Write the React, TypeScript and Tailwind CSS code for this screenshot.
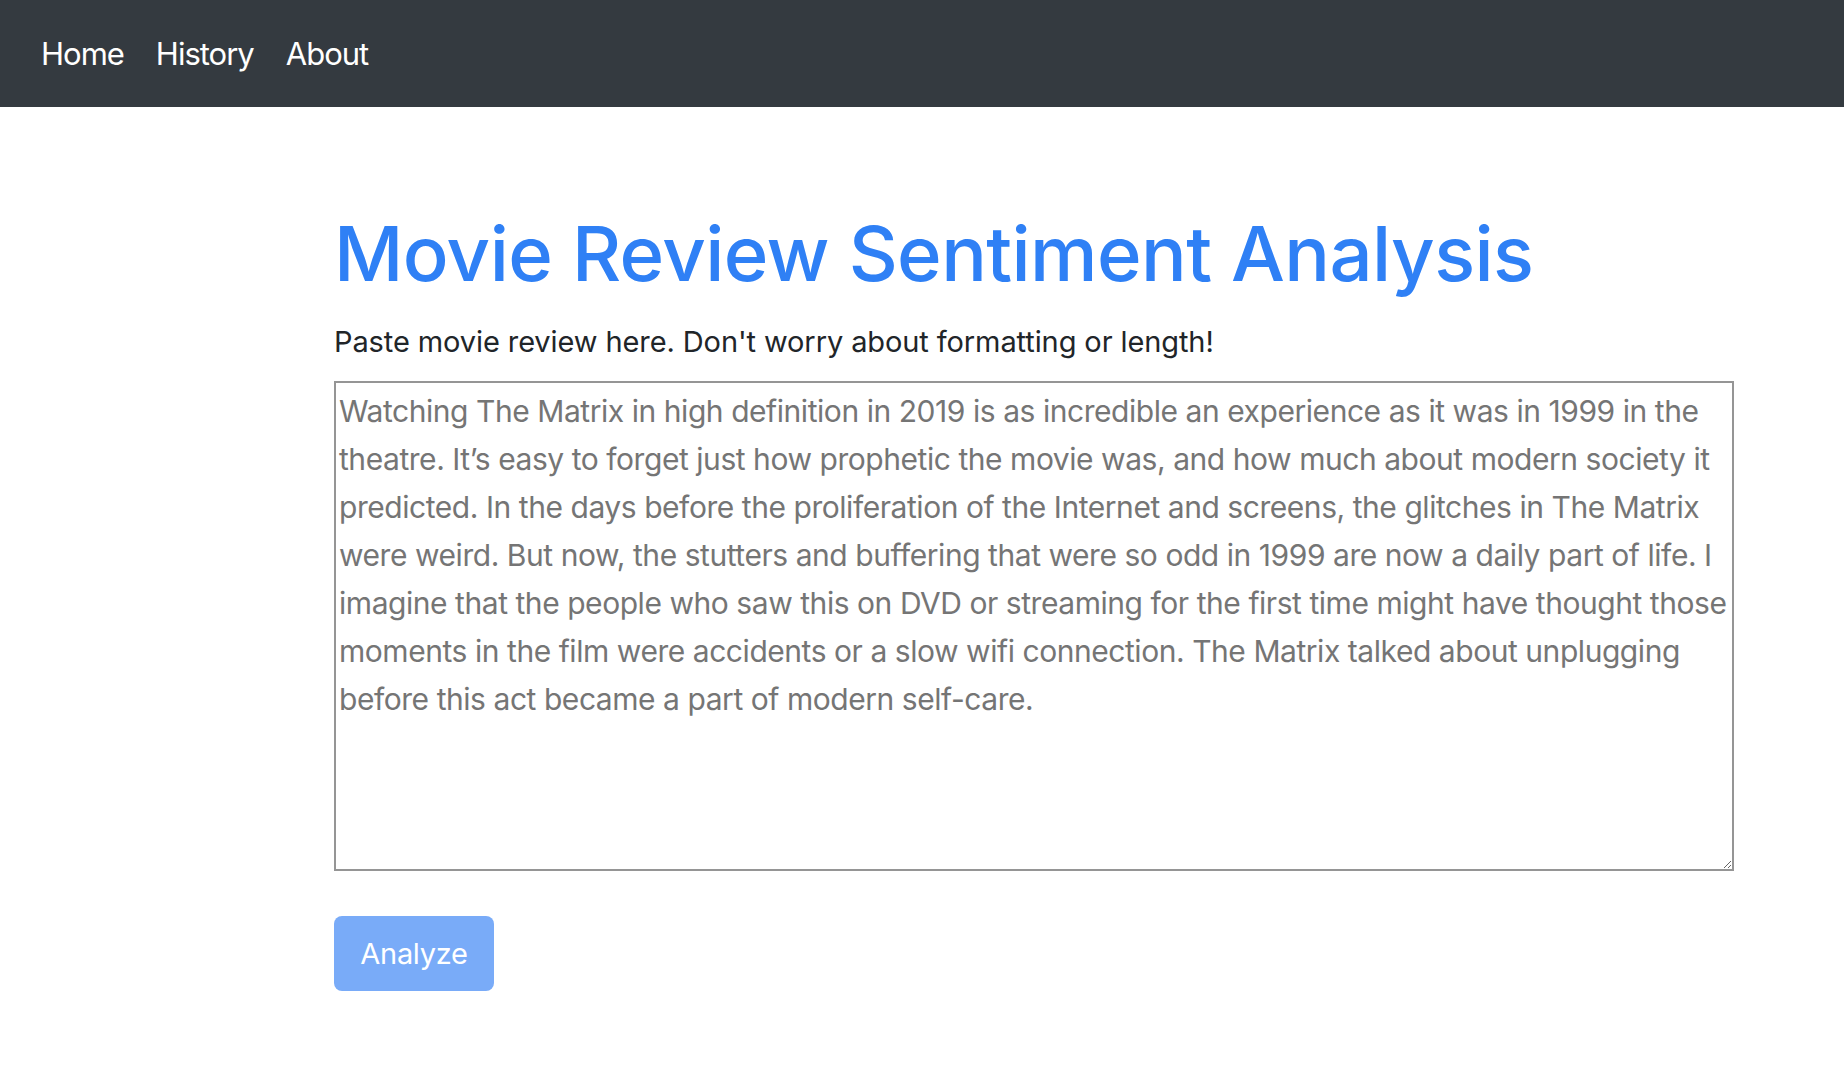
const review =
  "Watching The Matrix in high definition in 2019 is as incredible an experience as it was in 1999 in the theatre. It\u2019s easy to forget just how prophetic the movie was, and how much about modern society it predicted. In the days before the proliferation of the Internet and screens, the glitches in The Matrix were weird. But now, the stutters and buffering that were so odd in 1999 are now a daily part of life. I imagine that the people who saw this on DVD or streaming for the first time might have thought those moments in the film were accidents or a slow wifi connection. The Matrix talked about unplugging before this act became a part of modern self-care.";

export default function App() {
  return (
    <div className="min-h-screen bg-white font-['Inter',sans-serif]">
      {/* Top nav */}
      <nav className="h-[107px] bg-[#343a40] flex items-center px-[41px] gap-[32px]">
        <a className="text-[31px] leading-none text-white tracking-[-1px]">Home</a>
        <a className="text-[31px] leading-none text-white tracking-[-1px]">History</a>
        <a className="text-[31px] leading-none text-white tracking-[-1px]">About</a>
      </nav>

      <main className="pl-[334px] pt-[98px]">
        <h1 className="text-[76px] leading-[96px] text-[#2f80f5] font-medium tracking-[-0.6px]">
          Movie Review Sentiment Analysis
        </h1>
        <p className="mt-[18px] text-[29px] leading-[45px] text-[#212529] tracking-[-0.1px]">
          Paste movie review here. Don't worry about formatting or length!
        </p>
        <textarea
          className="mt-[17px] block w-[1400px] h-[490px] border-2 border-[#959595] pl-[3px] pr-[4px] pt-[4px] text-[30px] leading-[48px] text-[#757575] tracking-[-0.45px] outline-none resize"
          defaultValue={review}
        />
        <button className="mt-[45px] w-[160px] h-[75px] rounded-[8px] bg-[#79abf8] text-white text-[29px] tracking-[-0.3px]">
          Analyze
        </button>
      </main>
    </div>
  );
}
